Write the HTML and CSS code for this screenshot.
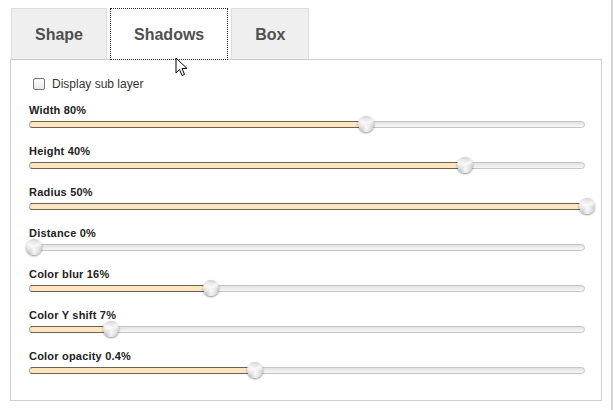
FILE: index.html
```html
<!DOCTYPE html>
<html>
<head>
<meta charset="utf-8">
<link rel="stylesheet" href="styles.css">
</head>
<body>
<div class="frame">
  <div class="tabs">
    <div class="tab">Shape</div>
    <div class="tab active">Shadows</div>
    <div class="tab">Box</div>
  </div>
  <div class="panel">
    <label class="check"><span class="box"></span>Display sub layer</label>
    <div class="row"><div class="label">Width 80%</div><div class="track" style="--p:60.6%"><div class="fill"></div><div class="knob"></div></div></div>
    <div class="row"><div class="label">Height 40%</div><div class="track" style="--p:78.5%"><div class="fill"></div><div class="knob"></div></div></div>
    <div class="row"><div class="label">Radius 50%</div><div class="track" style="--p:100.5%"><div class="fill"></div><div class="knob"></div></div></div>
    <div class="row"><div class="label">Distance 0%</div><div class="track" style="--p:0.7%"><div class="fill"></div><div class="knob"></div></div></div>
    <div class="row"><div class="label">Color blur 16%</div><div class="track" style="--p:32.7%"><div class="fill"></div><div class="knob"></div></div></div>
    <div class="row"><div class="label">Color Y shift 7%</div><div class="track" style="--p:14.6%"><div class="fill"></div><div class="knob"></div></div></div>
    <div class="row"><div class="label">Color opacity 0.4%</div><div class="track" style="--p:40.6%"><div class="fill"></div><div class="knob"></div></div></div>
  </div>
  <svg class="cursor" width="14" height="20" viewBox="0 0 14 20"><path d="M1 1 L1 16 L4.5 12.5 L7 18.5 L9.5 17.5 L7 11.5 L12 11.5 Z" fill="#fff" stroke="#000" stroke-width="1" stroke-linejoin="round"/></svg>
</div>
</body>
</html>
```
FILE: styles.css
```css
html, body {
  margin: 0;
  padding: 0;
  background: #fff;
}
.frame {
  position: relative;
  width: 613px;
  height: 410px;
  box-sizing: border-box;
  border-right: 2px solid #d4d4d4;
  padding: 8px 0 0 10px;
  font-family: "Liberation Sans", Arial, sans-serif;
}
.tabs {
  display: flex;
  gap: 3px;
  padding-left: 1px;
  position: relative;
  z-index: 1;
  margin-bottom: -1px;
}
.tab {
  height: 49px;
  padding: 1px 23px 0;
  line-height: 50px;
  background: #efefef;
  border: 1px solid #dcdcdc;
  border-bottom: 1px solid #c8c8c8;
  font-size: 16px;
  font-weight: bold;
  color: #505050;
}
.active {
  background: #fff;
  border: 1px dotted #222;
  border-bottom: 1px dotted #222;
}
.panel {
  width: 592px;
  height: 342px;
  box-sizing: border-box;
  border: 1px solid #cfcfcf;
  padding: 16px 17px 0 18px;
}
.check {
  display: flex;
  align-items: center;
  gap: 7px;
  padding-left: 4px;
  font-size: 12px;
  color: #333;
  height: 16px;
  margin-bottom: 11px;
}
.box {
  width: 10px;
  height: 10px;
  border: 1px solid #777;
  border-radius: 2px;
  background: linear-gradient(#fff, #e8e8e8);
}
.row {
  margin-bottom: 16px;
}
.label {
  font-size: 11px;
  font-weight: bold;
  line-height: 14px;
  color: #222;
  letter-spacing: 0.2px;
  margin-bottom: 4px;
}
.track {
  position: relative;
  width: 556px;
  height: 7px;
  box-sizing: border-box;
  border: 1px solid #c4c4c4;
  border-radius: 4px;
  background: linear-gradient(#e2e2e2, #f7f7f7);
}
.fill {
  position: absolute;
  left: -1px;
  top: -1px;
  height: 7px;
  width: var(--p);
  box-sizing: border-box;
  border-top: 1px solid #6e604c;
  border-bottom: 1px solid #6e604c;
  border-left: 1px solid #b8b0a4;
  border-radius: 4px 0 0 4px;
  background: #fbe6c0;
}
.knob {
  position: absolute;
  top: -6px;
  left: calc(var(--p) - 8px);
  width: 16px;
  height: 16px;
  border-radius: 50%;
  background:
    conic-gradient(from 20deg, rgba(255,255,255,0) 0deg, rgba(255,255,255,.7) 40deg, rgba(255,255,255,0) 80deg, rgba(255,255,255,.7) 160deg, rgba(255,255,255,0) 200deg, rgba(255,255,255,.7) 280deg, rgba(255,255,255,0) 330deg),
    radial-gradient(circle at 50% 45%, #f8f8f8 0, #e2e2e2 45%, #b4b4b4 85%, #9a9a9a 100%);
  box-shadow: 0 1px 2px rgba(0,0,0,.45);
}
.cursor {
  position: absolute;
  left: 175px;
  top: 57px;
  z-index: 2;
}
```
